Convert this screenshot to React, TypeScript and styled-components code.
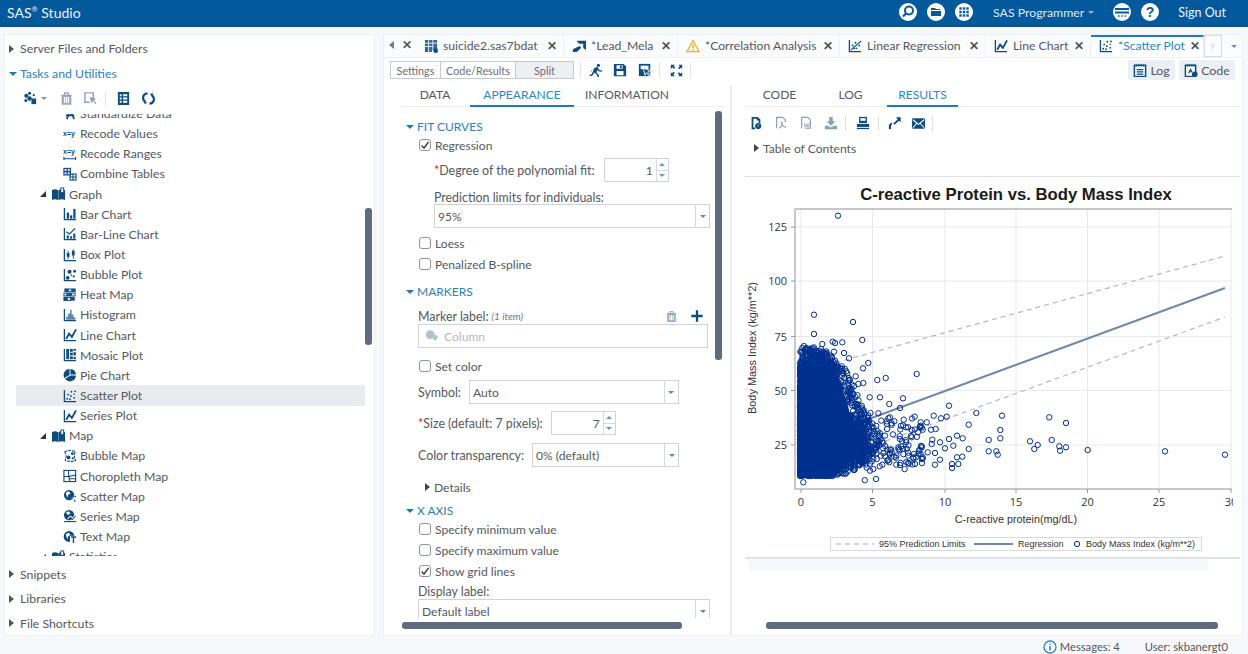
import React from "react";
import styled, { createGlobalStyle } from "styled-components";

const INK = "#0f4c7e";
const TEXT = "#54585e";
const BLUE = "#1b7cb8";

const Global = createGlobalStyle`
  html, body { margin: 0; padding: 0; background: #f6f8fb; overflow: hidden; }
  #root { height: 654px; }
  * { box-sizing: border-box; }
`;

const Page = styled.div`
  width: 1248px; height: 654px; display: flex; flex-direction: column;
  font-family: Lato, "Open Sans", sans-serif; font-size: 12.3px; color: ${TEXT};
  background: #f6f8fb;
`;
const Header = styled.header`
  height: 27px; background: #03599c; color: #fff; display: flex; align-items: center;
  padding: 0 22px 2px 7px; flex: none; border-bottom: 1px solid #0a4f88;
`;
const Brand = styled.div`
  font-size: 14px; margin-right: auto; color: #eef4f9;
  sup { font-size: 7.5px; line-height: 0; vertical-align: 6px; }
`;
const HeadIcon = styled.svg`
  width: 18px; height: 18px; display: block; flex: none; margin-left: ${p => p.$gap ?? 10}px;
`;
const Role = styled.div`
  font-size: 12.3px; margin-left: 20px; color: #dfeaf3; display: flex; align-items: center; gap: 4px;
  &::after { content: ""; border: 3px solid transparent; border-top: 3px solid #8fb6d4; margin-top: 3px; }
`;
const SignOut = styled.div`font-size: 12.5px; margin-left: 19px; color: #eef4f9;`;

const Main = styled.main`
  flex: none; height: 610px; padding: 7px 5px 0 4px; display: flex; gap: 8px;
`;
const Side = styled.aside`
  width: 371px; height: 602px; flex: none; background: #fff; border: 1px solid #eceff3;
  position: relative; display: flex; flex-direction: column;
`;
const AccordionRow = styled.div`
  height: ${p => p.$h ?? 24.6}px; flex: none; display: flex; align-items: center; padding: ${p => p.$pad ?? 0}px 0 0 4px;
  gap: ${p => (p.$open ? 3 : 6)}px;
  color: ${p => (p.$open ? "#2f7faf" : TEXT)}; font-size: 12.3px;
`;
const Caret = styled.i`
  display: block; flex: none; width: 0; height: 0; border-style: solid;
  ${p => p.$down
    ? `border-width: 4.5px 4px 0 4px; border-color: ${p.$color ?? BLUE} transparent transparent transparent;`
    : `border-width: 4.5px 0 4.5px 5px; border-color: transparent transparent transparent ${p.$color ?? "#555"};`}
`;
const TreeTools = styled.div`
  height: 27px; flex: none; display: flex; align-items: center; padding-left: 18px; margin-bottom: 2px;
`;
const ToolDivider = styled.span`
  width: 1px; height: ${p => p.$h ?? 16}px; background: #dfe3e8; flex: none; margin: 0 ${p => p.$m ?? 7}px;
`;
const ToolIcon = styled.svg`
  width: ${p => p.$s ?? 15}px; height: ${p => p.$s ?? 15}px; display: block; flex: none;
  margin-left: ${p => p.$gap ?? 0}px;
`;
const MiniCaret = styled.i`
  display: block; border: 3px solid transparent; border-top: 3.5px solid #7d8fa3; margin: 3px 0 0 3px;
`;
const TreeView = styled.div`
  height: 442px; flex: none; margin-left: 11px; width: 349px; overflow: hidden; margin-bottom: 6px;
`;
const TreeInner = styled.div`margin-top: -10.5px;`;
const Row = styled.div`
  height: 20.15px; display: flex; align-items: center; font-size: 12.3px;
  padding-left: ${p => (p.$group ? 24 : 47)}px; gap: 3px;
  background: ${p => (p.$active ? "#e9ebef" : "transparent")};
`;
const GroupCaret = styled.i`
  display: block; width: 0; height: 0; border-left: 6px solid transparent; border-bottom: 6px solid #333; margin-right: 3px;
`;
const RowIcon = styled.svg`width: 14px; height: 14px; flex: none; display: block;`;
const VBar = styled.div`
  position: absolute; background: #5f6b7e; border-radius: 3px; width: 7px;
  left: ${p => p.$x}px; top: ${p => p.$y}px; height: ${p => p.$h}px;
`;
const HBar = styled.div`
  position: absolute; background: #5f6b7e; border-radius: 3px; height: 7px;
  left: ${p => p.$x}px; top: ${p => p.$y}px; width: ${p => p.$w}px;
`;

const Work = styled.section`
  width: 860px; height: 602px; flex: none; background: #fff; border: 1px solid #eceff3; position: relative;
  display: flex; flex-direction: column;
`;
const TabStrip = styled.div`
  height: 23px; flex: none; display: flex; align-items: stretch; background: #fbfcfd; border-bottom: 1px solid #eef1f4;
  font-size: 12.2px;
`;
const StripNav = styled.div`
  width: 32px; flex: none; display: flex; align-items: center; gap: 8px; padding: 0 0 2px 5px; color: #555;
`;
const Tab = styled.div`
  width: ${p => p.$w}px; flex: none; display: flex; align-items: center; padding: 0 6px 3px 8px; gap: 5px;
  border-right: 1px solid #eef1f4; white-space: nowrap;
  color: ${p => (p.$active ? "#2f86bd" : TEXT)};
  background: ${p => (p.$active ? "#fff" : "transparent")};
  border-top: 2px solid ${p => (p.$active ? "#1b7cb8" : "transparent")};
  & > b { margin-left: auto; font-weight: 700; font-size: 11.5px; color: #4a4f56; }
`;
const Scroller = styled.div`
  width: 18px; flex: none; border: 1px solid #d8dce1; background: #fdfdfe; display: flex; align-items: center; justify-content: center;
`;
const StripMenu = styled.div`
  width: 20px; flex: none; display: flex; align-items: center; justify-content: center;
`;
const ActionBar = styled.div`
  height: 25px; flex: none; display: flex; align-items: center; padding: 1px 7px 2px 6px; margin-bottom: 2px;
`;
const Segments = styled.div`
  display: flex; height: 18px; border: 1px solid #c6cad0; flex: none; font-size: 10.8px;
`;
const Segment = styled.div`
  width: ${p => p.$w}px; display: flex; align-items: center; justify-content: center; color: #6b7077;
  border-right: 1px solid #c6cad0; background: ${p => (p.$on ? "#edeff2" : "#fff")};
  &:last-child { border-right: 0; }
`;
const PillButton = styled.div`
  height: 20px; width: ${p => p.$w}px; margin-left: ${p => p.$gap ?? 0}px; display: flex; align-items: center; justify-content: center; gap: 3px;
  background: #eceff3; border-radius: 2px; flex: none;
`;
const Push = styled.div`margin-left: auto;`;
const Split = styled.div`flex: 1; min-height: 0; display: flex;`;
const LeftPane = styled.div`
  width: 346px; flex: none; display: flex; flex-direction: column; padding-left: 16px; padding-right: 5px;
`;
const RightPane = styled.div`
  flex: 1; min-width: 0; border-left: 2px solid #eceff2; display: flex; flex-direction: column; padding-left: 13px;
  padding-right: 2px;
`;
const SubTabs = styled.div`
  height: 22px; flex: none; display: flex; border-bottom: 1px solid #edf0f3;
  font-size: 12px;
`;
const SubTab = styled.div`
  width: ${p => p.$w}px; flex: none; display: flex; align-items: center; justify-content: center; height: 22px; padding-bottom: 2px;
  color: ${p => (p.$on ? "#2f86bd" : TEXT)};
  border-bottom: 2px solid ${p => (p.$on ? "#1b7cb8" : "transparent")};
`;
const FormScroll = styled.div`
  height: 511px; overflow: hidden; flex: none; padding-top: 3px;
`;
const SectionTitle = styled.div`
  height: 19px; margin-top: ${p => p.$top ?? 0}px; display: flex; align-items: center; gap: 3px; padding: 2px 0 0 6px;
  color: #2f7faf; font-size: 12px;
`;
const CheckRow = styled.label`
  height: 20px; margin-top: ${p => p.$top ?? 0}px; display: flex; align-items: center; gap: 4px; padding-left: 19px;
  font-size: 12.1px;
`;
const Box = styled.span`
  width: 12px; height: 12px; border: 1px solid #8e9399; border-radius: 3px; background: #fff; flex: none;
  display: flex; align-items: center; justify-content: center;
`;
const Field = styled.div`
  height: ${p => p.$h ?? 24}px; margin-top: ${p => p.$top ?? 0}px; padding-left: ${p => p.$left ?? 18}px;
  padding-top: ${p => p.$pad ?? 0}px;
  display: flex; align-items: center; font-size: 12.4px; white-space: nowrap;
  em { font-size: 10px; font-style: italic; margin-left: 3px; color: #777; }
`;
const Star = styled.span`color: #c0392b;`;
const Control = styled.div`
  width: ${p => p.$w}px; height: 24px; flex: none; margin-left: ${p => p.$gap ?? 0}px; border: 1px solid #cfd3d8; background: #fff;
  display: flex; align-items: stretch; font-size: 12.1px; color: ${TEXT};
`;
const ControlText = styled.div`
  flex: 1; display: flex; align-items: center; padding: 0 3px; justify-content: ${p => (p.$end ? "flex-end" : "flex-start")};
  color: ${p => (p.$muted ? "#b5b9bf" : TEXT)}; gap: 5px;
`;
const DropButton = styled.div`
  width: 14px; flex: none; border-left: 1px solid #d6dade; display: flex; align-items: center; justify-content: center;
  &::after { content: ""; border: 3px solid transparent; border-top: 3.5px solid #6f8296; margin-top: 3px; }
`;
const Spin = styled.div`
  width: 12px; flex: none; border-left: 1px solid #d6dade; display: flex; flex-direction: column;
  div { flex: 1; display: flex; align-items: center; justify-content: center; }
  div:first-child { border-bottom: 1px solid #d6dade; }
  div:first-child::after { content: ""; border: 3px solid transparent; border-bottom: 3.5px solid #6f94b3; margin-top: -3px; }
  div:last-child::after { content: ""; border: 3px solid transparent; border-top: 3.5px solid #6f94b3; margin-top: 3px; }
`;
const DetailRow = styled.div`
  height: 20px; margin-top: 10px; padding-left: 25px; display: flex; align-items: center; gap: 4px; font-size: 12.1px;
`;
const ResultTools = styled.div`
  height: 22px; margin-top: 5px; flex: none; display: flex; align-items: center; padding-left: 4px;
`;
const Toc = styled.div`
  height: 20px; margin-top: 4px; padding-left: 9px; flex: none; display: flex; align-items: center; gap: 4px; font-size: 12.1px;
`;
const Rule = styled.div`
  height: ${p => p.$h ?? 1}px; flex: none; background: #dfe2e6; margin-top: ${p => p.$top}px;
`;
const ChartFrame = styled.div`height: 375px; flex: none; margin-top: 2px; width: 495px;`;
const ChartSvg = styled.svg`display: block; width: 495px; height: 375px;`;
const Strip = styled.div`height: 12px; width: 459px; margin-left: 4px; background: #f6f8fc; flex: none;`;

const Status = styled.footer`
  flex: 1; display: flex; align-items: center; justify-content: flex-end; padding: 2px 20px 0 0; font-size: 11.2px; gap: 25px;
`;
const StatusItem = styled.div`display: flex; align-items: center; gap: 3px;`;

/* ---------------- tree / tool drawings ---------------- */
const axis = "M1.5 1v12.5H14";
const mini = { fontFamily: "'Liberation Sans', sans-serif", fontWeight: 700, fontSize: 7.5, fill: INK } as const;
const G: Record<string, React.ReactNode> = {
  standardize: <path d="M4 13l4-9 4 9M3 9h9" fill="none" stroke={INK} strokeWidth="1.8" />,
  recode: <text x="0" y="10" {...mini}>x=y</text>,
  ranges: <g><text x="0" y="7" {...mini}>x=y</text><path d="M1 10.500v3.500M1 12.500h12.500M13.500 10.500v3.500" stroke={INK} fill="none" strokeWidth="1.100" /></g>,
  combine: <g fill="none" stroke={INK} strokeWidth="1.2"><rect x="1" y="1.5" width="7" height="7" fill="#cfe0ec" /><path d="M1 5h7M4.5 1.5v7" /><rect x="7.5" y="7.5" width="6.5" height="6.5" /><path d="M7.5 10.7h6.5M10.7 7.5v6.5" /></g>,
  book: <g fill={INK}><path d="M0 3.5c2-1.3 4-1.3 6.5 0V14C4 13 2 13 0 14z" /><path d="M6.8 3.5c2-1.3 5-1.3 7.2 0V14c-2-1-5-1-7.200 0z" /><rect x="9.5" y="1" width="3" height="5" fill="#fff" stroke={INK} /></g>,
  bar: <g><path d={axis} fill="none" stroke={INK} strokeWidth="1.4" /><rect x="4" y="6" width="2.4" height="6.5" fill={INK} /><rect x="7.5" y="9" width="2.4" height="3.5" fill={INK} /><rect x="11" y="2" width="2.4" height="10.5" fill={INK} /></g>,
  barline: <g><path d={axis} fill="none" stroke={INK} strokeWidth="1.4" /><rect x="4" y="9" width="2.2" height="3.5" fill={INK} /><rect x="7.6" y="10" width="2.2" height="2.5" fill={INK} /><rect x="11" y="7" width="2.2" height="5.5" fill={INK} /><path d="M3.5 5l3.5 2.5 6-6" fill="none" stroke={INK} strokeWidth="1.3" /></g>,
  box: <g><path d={axis} fill="none" stroke={INK} strokeWidth="1.4" /><path d="M5.5 3v9M11 1.5v10" stroke={INK} strokeWidth="1" /><rect x="4" y="5.5" width="3" height="4" fill={INK} /><rect x="9.5" y="3" width="3" height="5" fill={INK} /></g>,
  bubble: <g fill={INK}><path d={axis} fill="none" stroke={INK} strokeWidth="1.4" /><circle cx="5" cy="10.5" r="2" /><circle cx="7" cy="4" r="2.2" /><circle cx="11.5" cy="9" r="1.2" /><circle cx="12.5" cy="3.5" r="1.5" /><circle cx="9" cy="7.5" r=".9" /></g>,
  heat: <g fill="none" stroke={INK} strokeWidth="1"><rect x="2" y="1" width="3" height="3" fill={INK} /><rect x="6" y="1" width="3" height="3" /><rect x="10" y="1" width="3" height="3" fill={INK} /><rect x="1" y="5.5" width="3" height="3" /><rect x="5" y="5.5" width="3" height="3" fill={INK} /><rect x="9" y="5.5" width="4" height="3" /><rect x="1" y="10" width="3" height="3.5" fill={INK} /><rect x="5" y="10" width="3" height="3.5" /><rect x="9" y="10" width="3" height="3" fill={INK} /></g>,
  hist: <g><path d={axis} fill="none" stroke={INK} strokeWidth="1.4" /><path d="M3.5 12.5V9h2V6h2.2V2h1.6v5h2v3h2v2.5z" fill="#5b88a8" /></g>,
  line: <g><path d={axis} fill="none" stroke={INK} strokeWidth="1.4" /><path d="M3.5 11.5L6.5 6l3 3.5L14 1.5" fill="none" stroke={INK} strokeWidth="2" /></g>,
  mosaic: <g fill={INK}><path d={axis} fill="none" stroke={INK} strokeWidth="1.4" /><rect x="3.5" y="1" width="3" height="11" /><rect x="7.5" y="1" width="3" height="3" /><rect x="7.5" y="5" width="3" height="3" /><rect x="7.5" y="9" width="3" height="3" /><rect x="11.2" y="1" width="2.6" height="2" /><rect x="11.2" y="4.5" width="2.6" height="3.5" /><rect x="11.2" y="9.5" width="2.6" height="2.5" /></g>,
  pie: <g fill={INK}><path d="M7 1a6.5 6.5 0 0 0-5.6 9.6L7 7.5z" /><path d="M8 1a6.3 6.3 0 0 1 5.8 6H8z" /><path d="M2.2 11.6A6.4 6.4 0 0 0 13.8 8H8z" /></g>,
  scatter: <g fill={INK}><path d={axis} fill="none" stroke={INK} strokeWidth="1.4" /><circle cx="4.5" cy="10.5" r="1" /><circle cx="7.5" cy="11" r="1" /><circle cx="5.5" cy="6" r="1" /><circle cx="8.5" cy="7.5" r="1" /><circle cx="12" cy="9.5" r="1" /><circle cx="9" cy="3" r="1" /><circle cx="13" cy="2.5" r="1" /><circle cx="12" cy="5.5" r=".8" /></g>,
  bubbleMap: <g><path d="M2 3l4-1.5 7 1-1 5 1.5 5-5 1-6-1 1-5z" fill="none" stroke={INK} strokeWidth="1.2" strokeDasharray="3 1" /><circle cx="6" cy="9" r="2" fill={INK} /><circle cx="10" cy="5" r="1.5" fill={INK} /><circle cx="10.5" cy="10" r="1.2" fill={INK} /></g>,
  choro: <g fill="none" stroke={INK} strokeWidth="1.2"><rect x="1" y="1.5" width="12.5" height="12" /><path d="M1 8h5l1.5 5.5M6 1.5V8l7.5-1.5M7 10.5h6.5" /></g>,
  globe: <g><circle cx="6.5" cy="6.5" r="5.5" fill={INK} /><path d="M3 4l3-1.5 2 2-2.5 2-1 3z" fill="#fff" /><circle cx="10.5" cy="10" r="1" fill={INK} stroke="#fff" strokeWidth=".5" /><circle cx="13" cy="8" r=".9" fill={INK} /><circle cx="12.5" cy="12.5" r="1" fill={INK} /></g>,
  globeLine: <g><circle cx="6.5" cy="6.5" r="5.5" fill={INK} /><path d="M3 4l3-1.5 2 2-2.5 2z" fill="#fff" /><path d="M1 13.5h13" stroke={INK} strokeWidth="1.2" /><path d="M5 11l3-3 2 2 3.5-3" stroke="#fff" strokeWidth="1.6" fill="none" /><path d="M5 12l3-3 2 2 3.5-3.5" stroke={INK} strokeWidth="1.1" fill="none" /></g>,
  globeText: <g><circle cx="6.5" cy="7" r="5.8" fill={INK} /><path d="M3 4.5l3-1.5 2 2-2.5 2-1 3z" fill="#fff" /><rect x="7.5" y="6.2" width="7" height="8" fill="#fff" /><path d="M8.5 7.5h5.5M11.2 7.5V14" stroke={INK} strokeWidth="1.5" /></g>,
  tasks: <g fill={INK}><circle cx="3.5" cy="5" r="2.2" /><circle cx="7" cy="2.5" r="1.6" /><circle cx="3" cy="10" r="1.6" /><circle cx="7" cy="8" r="2.4" /><rect x="9" y="8" width="5" height="6" /><circle cx="11.5" cy="4.5" r="1.2" /></g>,
  trash: <g fill="none" stroke="#90a1b3" strokeWidth="1.2"><path d="M2.5 4.5h11M6 4V2h4v2" /><rect x="3.5" y="5" width="9" height="9" fill="#a9b6c3" /><path d="M6 6.5v6M8 6.5v6M10 6.5v6" stroke="#fff" /></g>,
  selectArrow: <g fill="none" stroke="#8fa1b3" strokeWidth="1.5"><path d="M11 8V2H2v10h5" /><path d="M7 6l2 7 1.5-2.5L13.5 14l1-1-3-3L14 8.5z" fill="#8fa1b3" strokeWidth="0" /></g>,
  sheet: <g fill={INK}><path d="M2 1h12v14H2zM4 3.5v2h2v-2zm3.5 0v2H12v-2zM4 7v2h2V7zm3.5 0v2H12V7zM4 10.5v2h2v-2zm3.5 0v2H12v-2z" fillRule="evenodd" /></g>,
  refresh: <g fill="none" stroke={INK} strokeWidth="2.4"><path d="M7 2.5C3 2.5 1.5 6 2.5 9c.4 1.2 1 2 2 2.5" /><path d="M9 13.5c4 0 5.5-3.5 4.5-6.5-.4-1.2-1-2-2-2.5" /><path d="M3 13.5l3.5-.5-2-3M13 2.5l-3.500.5 2 3" fill={INK} strokeWidth="0" /></g>,
  run: <g fill={INK}><circle cx="10" cy="2.5" r="1.7" /><path d="M5 5.5l4-1.500 2 3.500 3 .5v1.300l-4-.6-1-1.500-1 3 2.500 2.500V15h-1.500l-.5-2.500-3-2.500L4 13l-3 1-.5-1.300 2.500-1 1.500-3.500 1-2.500-2 1-.6 2H1.800z" /></g>,
  save: <g fill={INK}><path d="M1 1h11l3 3v11H1zM4 2.500v4h7v-4zM4 9v5h8V9z" fillRule="evenodd" /><rect x="8" y="3" width="2" height="3" /></g>,
  saveAs: <g><path d="M1 1h13v14H1z" fill={INK} /><rect x="3" y="3" width="9" height="4" fill="#fff" /><path d="M6 6l2 8 1.700-3 3 4 1.300-1-2.800-3.800L14 8.500z" fill={INK} stroke="#fff" strokeWidth="1" /></g>,
  expand: <g fill={INK}><path d="M1 1h5l-1.500 1.500 2 2-1.500 1.500-2-2L1 6zM15 1v5l-1.500-1.500-2 2L10 5l2-2L10.500 1zM1 15v-5l1.500 1.500 2-2L6 11l-2 2 1.500 2zM15 15h-5l1.500-1.500-2-2 1.500-1.500 2 2L15 10z" /></g>,
  pageRun: <g><path d="M3 1h7l3 3v4H11V5H9V3H5v10h2v2H3z" fill={INK} /><circle cx="10.500" cy="11.500" r="3.500" fill={INK} /><path d="M10.500 9.800v2M10.500 13v.2" stroke="#fff" strokeWidth="1" /></g>,
  pagePdf: <g fill="none" stroke="#8aa0b4" strokeWidth="1.400"><path d="M3 14V1.500h7L13 4.500v3" /><path d="M6 14c3-2 4-6 3-7-1 1 0 5 5 6" /></g>,
  pageWord: <g fill="none" stroke="#8aa0b4" strokeWidth="1.400"><path d="M3 14V1.500h7L13 4.500V14H7" /><path d="M6 8l1.300 5L9 9l1.300 4L12 8" strokeWidth="1" /></g>,
  download: <g fill="#8ca1b5"><path d="M6 1h4v5h3L8 11 3 6h3z" /><path d="M1 11h3.500L8 13l3.500-2H15v4H1z" /></g>,
  printer: <g fill={INK}><rect x="3.500" y="1" width="9" height="7" /><rect x="5" y="2.500" width="6" height="3" fill="#fff" /><rect x="1" y="9" width="14" height="3.500" /><rect x="1" y="13.500" width="14" height="1.500" /></g>,
  share: <g fill={INK}><path d="M9 1.500h5.500V7l-2-1.700L7.500 10l-1.400-1.400 5-4.800z" /><rect x="1" y="10" width="2.500" height="5" /><path d="M1 10l3-2.500 1 1.500-2 2z" /></g>,
  mail: <g><rect x="1" y="2.500" width="14" height="11" rx="1.500" fill={INK} /><path d="M2 4l6 5 6-5M2 12.500L6 8M14 12.500L10 8" stroke="#fff" fill="none" strokeWidth="1.100" /></g>,
  log: <g><rect x="1.500" y="2.500" width="12" height="12" fill="#fff" stroke={INK} strokeWidth="1.600" /><path d="M3.500 1v3M6 1v3M8.500 1v3M11.500 1v3" stroke={INK} strokeWidth="1" /><path d="M4 7h7M4 9.500h7M4 12h7" stroke={INK} strokeWidth="1.300" /></g>,
  code: <g><rect x="1.500" y="2.500" width="11" height="12" fill="#fff" stroke={INK} strokeWidth="1.600" /><path d="M3.500 1v3M6 1v3M8.500 1v3M11 1v3" stroke={INK} strokeWidth="1" /><circle cx="11.500" cy="12" r="3" fill={INK} /><path d="M5 11l2-4 1.500 3" stroke={INK} fill="none" strokeWidth="1.500" /></g>,
  dataset: <g fill={INK}><path d="M1 1h13v11H8.500v2H1z" fillOpacity=".85" /><path d="M1 4.500h13M1 8h9M5 1v13M9.500 1v11" stroke="#fff" strokeWidth=".9" /><circle cx="12.500" cy="12.500" r="2.500" /></g>,
  program: <g fill={INK}><path d="M5 2h10v10l-3-2.500V5H7.500z" /><path d="M8 7.500L10 9.500 5 14H1v-3z" /></g>,
  column: <g fill="#b2c1ce"><circle cx="6" cy="6.500" r="5" /><path d="M9 8l3.500-1.500L15 9l-2.500 4-3-1z" /></g>,
};
const Draw = ({ n }: { n: string }) => <>{G[n]}</>;
const Glyph = ({ n }: { n: string }) => (
  <RowIcon viewBox="0 0 15 15" aria-hidden><Draw n={n} /></RowIcon>
);
const Tool = ({ n, s, gap }: { n: string; s?: number; gap?: number }) => (
  <ToolIcon viewBox="0 0 16 16" $s={s} $gap={gap} aria-hidden><Draw n={n} /></ToolIcon>
);
const Tick = () => (
  <svg width="10" height="10" viewBox="0 0 10 10" aria-hidden><path d="M1.500 5.500L4 8l4.500-6" fill="none" stroke="#444" strokeWidth="1.500" /></svg>
);
const Check = ({ label, on, top }: { label: string; on?: boolean; top?: number }) => (
  <CheckRow $top={top}><Box>{on && <Tick />}</Box>{label}</CheckRow>
);

const treeRows: [string, string, boolean?, boolean?][] = [
  ["Standardize Data", "standardize"], ["Recode Values", "recode"], ["Recode Ranges", "ranges"], ["Combine Tables", "combine"],
  ["Graph", "book", true], ["Bar Chart", "bar"], ["Bar-Line Chart", "barline"], ["Box Plot", "box"], ["Bubble Plot", "bubble"],
  ["Heat Map", "heat"], ["Histogram", "hist"], ["Line Chart", "line"], ["Mosaic Plot", "mosaic"], ["Pie Chart", "pie"],
  ["Scatter Plot", "scatter", false, true], ["Series Plot", "line"], ["Map", "book", true], ["Bubble Map", "bubbleMap"],
  ["Choropleth Map", "choro"], ["Scatter Map", "globe"], ["Series Map", "globeLine"], ["Text Map", "globeText"], ["Statistics", "book", true],
];

/* ---------------- chart data ---------------- */
const OX = 745, OY = 180;
const z10 = [[1440,257],[1260,247],[1028,243],[963,162],[913,145],[771,140],[694,132],[612,110],[474,88],[515,15],[422,27],[397,33],[963,235],[943,232],[945,245],[920,213],[878,228],[868,240],[855,217],[766,183],[766,208],[731,213],[731,247],[754,247],[758,257],[671,240],[671,167],[652,263],[636,265],[640,285],[621,285],[621,297],[653,208],[636,200],[612,210],[625,230],[605,143],[588,148],[566,140],[509,143],[545,160],[527,160],[527,170],[533,182],[572,180],[558,182],[500,183],[483,175],[476,152],[433,105],[405,85],[374,85],[465,117],[430,148],[400,133],[355,42],[340,45],[310,42],[280,45],[562,212],[585,220],[560,225],[530,232],[500,205],[600,238],[570,252],[548,250],[530,270],[510,285],[585,272],[570,287],[512,265],[465,288],[433,280],[412,287],[404,292],[385,300],[375,305],[460,235],[440,250],[420,262],[395,270],[175,340]];
const z9 = [[279,110],[207,407],[207,465],[324,429],[232,495],[263,488],[270,492],[292,490],[352,483],[297,522],[312,538],[267,518],[370,552],[354,568],[304,577],[332,592],[290,562],[194,513],[180,520],[175,533],[172,545],[188,550],[222,528],[245,522],[230,545],[270,545]];
let seed = 12345;
const rnd = () => ((seed = (seed * 1664525 + 1013904223) % 4294967296) / 4294967296);
const gauss = () => (rnd() + rnd() + rnd() + rnd() - 2) / 0.58;
const pts: [number, number][] = [
  ...z10.map(([x, y]) => [x / 3, 370 + y / 3 - OY] as [number, number]),
  ...z9.map(([x, y]) => [x / 3, y / 3] as [number, number]),
];
/* width of the dense cloud at a given pixel row of the page */
const reachAt = (y: number) => {
  const t: [number, number][] = [[345, 16], [362, 30], [385, 38], [410, 46], [440, 60], [460, 50], [472, 38], [479, 26]];
  for (let i = 1; i < t.length; i++) {
    if (y <= t[i][0]) {
      const f = (y - t[i - 1][0]) / (t[i][0] - t[i - 1][0]);
      return t[i - 1][1] + f * (t[i][1] - t[i - 1][1]);
    }
  }
  return 26;
};
for (let i = 0; i < 4300; i++) {
  const y = 368 + rnd() * 109;
  const x = 800 + Math.pow(rnd(), 1.3) * reachAt(y);
  pts.push([x - OX, y - OY]);
}
for (let i = 0; i < 170; i++) {
  const y = 346 + Math.pow(rnd(), 0.55) * 24;
  pts.push([800 + Math.pow(rnd(), 1.2) * reachAt(y) * 1.2 - OX, y - OY]);
}
for (let i = 0; i < 380; i++) {
  const y = 418 + rnd() * 48;
  pts.push([830 + Math.pow(rnd(), 1.4) * 40 - OX, y - OY]);
}
for (let i = 0; i < 220; i++) {
  const y = 368 + rnd() * 110;
  pts.push([800 + reachAt(y) * (1 + rnd() * 0.4) - OX, y - OY]);
}
for (let i = 0; i < 120; i++) {
  const xVal = 4 + Math.pow(rnd(), 1.3) * 4.5;
  const yVal = 25 + gauss() * 6;
  pts.push([801 + xVal * 14.33 - OX, 446 - (yVal - 25) * 2.18 - OY]);
}
const ringPath = pts.map(([x, y]) => `M${(x - 2.7).toFixed(1)} ${y.toFixed(1)}a2.7 2.7 0 1 0 5.4 0a2.7 2.7 0 1 0 -5.4 0`).join("");

const px = (v: number) => v - OX;
const py = (v: number) => v - OY;
const xTicks = [[0, 801], [5, 872.5], [10, 945], [15, 1016], [20, 1087.5], [25, 1159], [30, 1231]];
const yTicks = [[25, 446], [50, 391.5], [75, 337.5], [100, 282], [125, 228]];

const Chart = () => (
  <ChartSvg viewBox="0 0 495 375" role="img">
    <defs><clipPath id="plotclip"><rect x="0" y="0" width="488" height="375" /></clipPath></defs>
    <text x="271" y="21" textAnchor="middle" fontFamily="'Liberation Sans', sans-serif" fontWeight="700" fontSize="16.700" fill="#1a1a1a">C-reactive Protein vs. Body Mass Index</text>
    <g clipPath="url(#plotclip)">
      {xTicks.map(([v, x]) => <path key={v} d={`M${px(x)} ${py(210)}V${py(490)}`} stroke="#e8e9ec" />)}
      {yTicks.map(([v, y]) => <path key={v} d={`M${px(795)} ${py(y)}H${px(1232)}`} stroke="#e8e9ec" />)}
      <path d={`M${px(795)} ${py(210)}H${px(1232)}M${px(795)} ${py(210)}V${py(490)}H${px(1232)}`} fill="none" stroke="#b5b7bb" strokeWidth="1.500" />
      {xTicks.map(([v, x]) => <path key={v} d={`M${px(x)} ${py(490)}v4`} stroke="#999" />)}
      {yTicks.map(([v, y]) => <path key={v} d={`M${px(795)} ${py(y)}h-4`} stroke="#999" />)}
      <path d={`M${px(801)} ${py(373)}L${px(1225)} ${py(257)}`} stroke="#b4b7c8" strokeWidth="1.200" strokeDasharray="5 4" fill="none" />
      <path d={`M${px(801)} ${py(473)}L${px(1225)} ${py(318)}`} stroke="#b4b7c8" strokeWidth="1.200" strokeDasharray="5 4" fill="none" />
      <path d={`M${px(801)} ${py(445)}L${px(1225)} ${py(289)}`} stroke="#7288a8" strokeWidth="2" fill="none" />
      <path d={ringPath} fill="none" stroke="#00308f" strokeWidth="1" />
      <g fontFamily="'Open Sans', sans-serif" fontSize="11" fill="#333">
        {xTicks.map(([v, x]) => <text key={v} x={px(x)} y={py(507)} textAnchor="middle">{v}</text>)}
        {yTicks.map(([v, y]) => <text key={v} x={px(787)} y={py(y) + 4} textAnchor="end">{v}</text>)}
      </g>
    </g>
    <text x={271} y={344} textAnchor="middle" fontFamily="'Liberation Sans', sans-serif" fontSize="10.800" fill="#333">C-reactive protein(mg/dL)</text>
    <text transform={`translate(11 ${py(349)}) rotate(-90)`} textAnchor="middle" fontFamily="'Liberation Sans', sans-serif" fontSize="10.900" fill="#333">Body Mass Index (kg/m**2)</text>
    <g fontFamily="'Liberation Sans', sans-serif" fontSize="9" fill="#333">
      <rect x={85.500} y={358.500} width={371} height={13} fill="#fff" stroke="#d8d9dc" />
      <path d="M91 365h38" stroke="#a5a8bd" strokeWidth="1.200" strokeDasharray="5 4" />
      <text x={134} y={367.500}>95% Prediction Limits</text>
      <path d="M229 365h39" stroke="#7288a8" strokeWidth="2" />
      <text x={273} y={367.500}>Regression</text>
      <circle cx={332} cy={365} r={2.700} fill="none" stroke="#00308f" />
      <text x={341} y={367.500}>Body Mass Index (kg/m**2)</text>
    </g>
  </ChartSvg>
);

const tabs: [string, string, number, boolean?][] = [
  ["suicide2.sas7bdat", "dataset", 148], ["*Lead_Mela", "program", 114], ["*Correlation Analysis", "warn", 162],
  ["Linear Regression", "linreg", 146], ["Line Chart", "line", 105], ["*Scatter Plot", "scatter", 113, true],
];
const Warn = () => (
  <RowIcon viewBox="0 0 15 15" aria-hidden><path d="M7.500 1.500L14 13.500H1z" fill="#fff8e0" stroke="#e8b23a" strokeWidth="1.300" /><path d="M7.500 5.500v4.500M7.500 11v1.200" stroke="#d79a20" strokeWidth="1.200" /></RowIcon>
);
const LinReg = () => (
  <RowIcon viewBox="0 0 15 15" aria-hidden><path d={axis} fill="none" stroke={INK} strokeWidth="1.400" /><path d="M3 12L14 2" stroke={INK} strokeWidth="1.200" /><g fill={INK}><circle cx="5" cy="7" r="1" /><circle cx="9" cy="10" r="1" /><circle cx="8" cy="4" r="1" /><circle cx="12" cy="7" r="1" /><circle cx="6.500" cy="10" r="1" /></g></RowIcon>
);

const Select = ({ w, gap, text }: { w: number; gap?: number; text: string }) => (
  <Control $w={w} $gap={gap}><ControlText>{text}</ControlText><DropButton /></Control>
);
const Spinner = ({ w, gap, val }: { w: number; gap?: number; val: string }) => (
  <Control $w={w} $gap={gap}><ControlText $end>{val}</ControlText><Spin><div /><div /></Spin></Control>
);

export default function App() {
  return (
    <Page>
      <Global />
      <Header>
        <Brand>SAS<sup>®</sup> Studio</Brand>
        <HeadIcon viewBox="0 0 18 18" $gap={0}><circle cx="9" cy="9" r="9" fill="#fff" /><circle cx="10" cy="7.500" r="4" fill="none" stroke="#03599c" strokeWidth="2" /><path d="M7 10.500l-3 3" stroke="#03599c" strokeWidth="2.200" /></HeadIcon>
        <HeadIcon viewBox="0 0 18 18"><circle cx="9" cy="9" r="9" fill="#fff" /><path d="M4 6V5h4l1 1h4v1H4zM4 8h10v5H4z" fill="#03599c" /></HeadIcon>
        <HeadIcon viewBox="0 0 18 18"><circle cx="9" cy="9" r="9" fill="#fff" /><g fill="#03599c">{[5.500, 9, 12.500].flatMap(x => [5.500, 9, 12.500].map(y => <rect key={`${x}${y}`} x={x - 1.200} y={y - 1.200} width="2.400" height="2.400" />))}</g></HeadIcon>
        <Role>SAS Programmer</Role>
        <HeadIcon viewBox="0 0 18 18" $gap={19}><circle cx="9" cy="9" r="9" fill="#fff" /><path d="M2 6h14M2 9.500h14" stroke="#03599c" strokeWidth="1.800" /><path d="M5 13h1.500M8.300 13h1.500M11.500 13H13" stroke="#03599c" strokeWidth="1.500" /></HeadIcon>
        <HeadIcon viewBox="0 0 18 18"><circle cx="9" cy="9" r="9" fill="#fff" /><text x="9" y="14" textAnchor="middle" fontFamily="'Liberation Sans', sans-serif" fontWeight="700" fontSize="14" fill="#03599c">?</text></HeadIcon>
        <SignOut>Sign Out</SignOut>
      </Header>
      <Main>
        <Side>
          <AccordionRow $h={25} $pad={2}><Caret />Server Files and Folders</AccordionRow>
          <AccordionRow $h={25} $pad={2} $open><Caret $down />Tasks and Utilities</AccordionRow>
          <TreeTools>
            <Tool n="tasks" /><MiniCaret />
            <Tool n="trash" gap={12} />
            <Tool n="selectArrow" gap={9} />
            <ToolDivider $h={15} $m={7} />
            <Tool n="sheet" gap={3} />
            <Tool n="refresh" gap={10} />
          </TreeTools>
          <TreeView>
            <TreeInner>
              {treeRows.map(([label, icon, group, active]) => (
                <Row key={label} $group={group} $active={active}>
                  {group && <GroupCaret />}
                  <Glyph n={icon} />
                  {label}
                </Row>
              ))}
            </TreeInner>
          </TreeView>
          <AccordionRow><Caret />Snippets</AccordionRow>
          <AccordionRow><Caret />Libraries</AccordionRow>
          <AccordionRow><Caret />File Shortcuts</AccordionRow>
          <VBar $x={360} $y={173} $h={137} />
        </Side>
        <Work>
          <TabStrip>
            <StripNav><Caret $color="#777" style={{ transform: "scaleX(-1)" }} /><b style={{ fontSize: 11.5 }}>✕</b></StripNav>
            {tabs.map(([label, icon, w, active]) => (
              <Tab key={label} $w={w} $active={active}>
                {icon === "warn" ? <Warn /> : icon === "linreg" ? <LinReg /> : <Glyph n={icon} />}
                {label}
                <b>✕</b>
              </Tab>
            ))}
            <Scroller><Caret $color="#e6e9ec" /></Scroller>
            <StripMenu><MiniCaret /></StripMenu>
          </TabStrip>
          <ActionBar>
            <Segments>
              <Segment $w={50}>Settings</Segment>
              <Segment $w={75}>Code/Results</Segment>
              <Segment $w={57} $on>Split</Segment>
            </Segments>
            <ToolDivider $h={16} $m={6} />
            <Tool n="run" s={15} gap={2} />
            <Tool n="save" s={14} gap={9} />
            <Tool n="saveAs" s={14} gap={11} />
            <ToolDivider $h={16} $m={7} />
            <Tool n="expand" s={13} gap={3} />
            <ToolDivider $h={16} $m={7} />
            <Push />
            <PillButton $w={47}><Glyph n="log" />Log</PillButton>
            <PillButton $w={56} $gap={4}><Glyph n="code" />Code</PillButton>
          </ActionBar>
          <Split>
            <LeftPane>
              <SubTabs>
                <SubTab $w={70}>DATA</SubTab>
                <SubTab $w={104} $on>APPEARANCE</SubTab>
                <SubTab $w={106}>INFORMATION</SubTab>
              </SubTabs>
              <FormScroll>
                <SectionTitle $top={6}><Caret $down />FIT CURVES</SectionTitle>
                <Check label="Regression" on />
                <Field $top={3} $left={34}><Star>*</Star>Degree of the polynomial fit:<Spinner w={65} gap={9} val="1" /></Field>
                <Field $top={9} $h={13} $left={34}>Prediction limits for individuals:</Field>
                <Field $left={34}><Select w={276} text="95%" /></Field>
                <Check label="Loess" top={5} />
                <Check label="Penalized B-spline" top={1} />
                <SectionTitle $top={7}><Caret $down />MARKERS</SectionTitle>
                <Field $top={5} $h={18} $pad={4}>Marker label:<em>(1 item)</em>
                  <Tool n="trash" s={13} gap={142} />
                  <ToolIcon viewBox="0 0 16 16" $s={14} $gap={12}><path d="M8 1.500v13M1.500 8h13" stroke={INK} strokeWidth="2.600" /></ToolIcon>
                </Field>
                <Field $top={1}><Control $w={290}><ControlText $muted><Tool n="column" s={14} gap={3} />Column</ControlText></Control></Field>
                <Check label="Set color" top={8} />
                <Field $top={4}>Symbol:<Select w={210} gap={8} text="Auto" /></Field>
                <Field $top={7}><Star>*</Star>Size (default: 7 pixels):<Spinner w={65} gap={8} val="7" /></Field>
                <Field $top={8}>Color transparency:<Select w={147} gap={8} text="0% (default)" /></Field>
                <DetailRow><Caret $color="#444" />Details</DetailRow>
                <SectionTitle $top={3}><Caret $down />X AXIS</SectionTitle>
                <Check label="Specify minimum value" />
                <Check label="Specify maximum value" top={1} />
                <Check label="Show grid lines" on top={1} />
                <Field $top={3} $h={15}>Display label:</Field>
                <Field><Select w={292} text="Default label" /></Field>
              </FormScroll>
            </LeftPane>
            <RightPane>
              <SubTabs>
                <SubTab $w={69}>CODE</SubTab>
                <SubTab $w={73}>LOG</SubTab>
                <SubTab $w={71} $on>RESULTS</SubTab>
              </SubTabs>
              <ResultTools>
                <Tool n="pageRun" s={14} />
                <Tool n="pagePdf" s={14} gap={11} />
                <Tool n="pageWord" s={14} gap={11} />
                <Tool n="download" s={14} gap={11} />
                <ToolDivider $h={15} $m={7} />
                <Tool n="printer" s={14} gap={3} />
                <ToolDivider $h={15} $m={8} />
                <Tool n="share" s={14} gap={1} />
                <Tool n="mail" s={15} gap={9} />
                <ToolDivider $h={15} $m={6} />
              </ResultTools>
              <Toc><Caret $color="#444" />Table of Contents</Toc>
              <Rule $top={18} />
              <ChartFrame><Chart /></ChartFrame>
              <Rule $top={3} $h={2} />
              <Strip />
            </RightPane>
          </Split>
          <VBar $x={331} $y={76} $h={249} />
          <HBar $x={18} $y={587} $w={280} />
          <HBar $x={382} $y={587} $w={452} />
        </Work>
      </Main>
      <Status>
        <StatusItem>
          <svg width="14" height="14" viewBox="0 0 14 14" aria-hidden><circle cx="7" cy="7" r="6" fill="#fff" stroke="#2f86bd" strokeWidth="1.300" /><path d="M7 6v4.500M7 3.500v1.300" stroke="#2f86bd" strokeWidth="1.600" /></svg>
          Messages: 4
        </StatusItem>
        <StatusItem>User: skbanergt0</StatusItem>
      </Status>
    </Page>
  );
}
